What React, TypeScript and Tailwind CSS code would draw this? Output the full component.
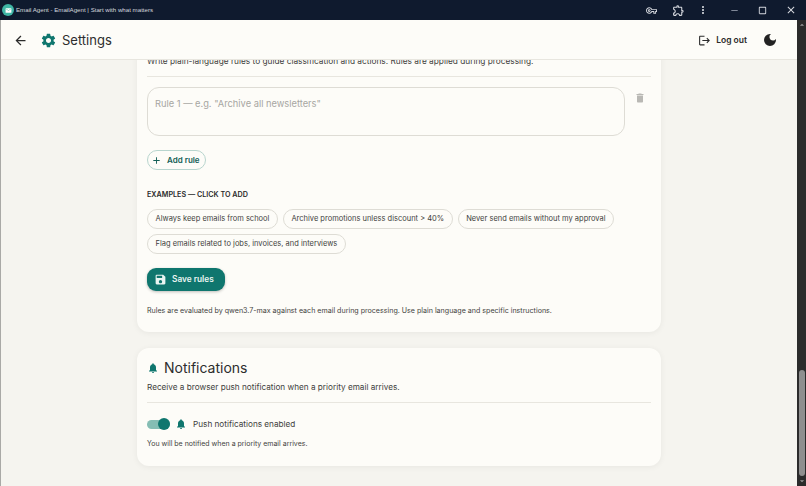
import React from "react";
import { MdArrowBack, MdSettings, MdLogout, MdDarkMode, MdAdd, MdSave, MdNotifications, MdOutlineExtension, MdMoreVert, MdOutlineVpnKey, MdDelete, MdClose, MdRemove, MdCropSquare, MdArrowDropUp, MdArrowDropDown, MdEmail } from "react-icons/md";

const examples = [
  "Always keep emails from school",
  "Archive promotions unless discount > 40%",
  "Never send emails without my approval",
  "Flag emails related to jobs, invoices, and interviews",
];

export default function App() {
  return (
    <div className="w-[806px] h-[486px] overflow-hidden flex flex-col bg-[#f5f4ef] font-['Inter',sans-serif] text-[#2b2b2b]">
      <div className="h-5 shrink-0 bg-[#0f1a2e] flex items-center pl-[2px] text-[#d5d8de]">
        <div className="w-3 h-3 rounded-full bg-[#3fb5a5] flex items-center justify-center">
          <MdEmail className="text-white" size={7} />
        </div>
        <span className="ml-[2px] text-[6.15px] whitespace-nowrap font-['Liberation_Sans',sans-serif]">Email Agent - EmailAgent | Start with what matters</span>
        <div className="ml-auto flex items-center">
          <MdOutlineVpnKey size={11} className="mr-[15px]" />
          <MdOutlineExtension size={13} className="mr-[12px]" />
          <MdMoreVert size={12} className="mr-[20px]" />
          <MdRemove size={11} className="mr-[17px] text-[#8b93a3]" />
          <MdCropSquare size={11} className="mr-[17px]" />
          <MdClose size={12} className="mr-[9px]" />
        </div>
      </div>
      <div className="flex-1 min-h-0 flex">
        <div className="flex-1 min-w-0 flex flex-col border-l border-[#a9a9a6]">
          <header className="h-10 shrink-0 bg-[#fdfcf8] border-b border-[#e8e6df] flex items-center pt-px pl-[12px] pr-[19px]">
            <MdArrowBack size={15} className="text-[#2b2b2b]" />
            <MdSettings size={17} className="ml-[12px] text-[#0f766e]" />
            <h1 className="ml-[5px] mt-[2px] text-[13px] font-normal text-[#2d2d2d]">Settings</h1>
            <MdLogout size={13} className="ml-auto text-[#2b2b2b]" />
            <span className="ml-[5px] text-[8.5px] font-semibold whitespace-nowrap">Log out</span>
            <MdDarkMode size={16} className="ml-[15px] text-[#222]" />
          </header>
          <main className="flex-1 min-h-0 overflow-hidden pl-[136px]">
            <section className="w-[524px] -mt-[8px] bg-[#fdfcf8] rounded-b-xl shadow-[0_1px_6px_rgba(0,0,0,0.06)] px-[10px] pb-[16px]">
              <p className="h-[25px] pt-[3px] leading-[12px] text-[8.3px] whitespace-nowrap text-[#3f3f3d] border-b border-[#e8e6df]">Write plain-language rules to guide classification and actions. Rules are applied during processing.</p>
              <div className="mt-[10px] flex items-start">
                <div className="w-[478px] h-[49px] rounded-xl border border-[#dedcd5] px-[7px] pt-[10px] text-[9.3px] leading-3 text-[#a7a6a2]">Rule 1 — e.g. "Archive all newsletters"</div>
                <MdDelete size={12} className="ml-[9px] mt-[5px] text-[#b9b8b4]" />
              </div>
              <button className="mt-[14px] h-[20px] w-[59px] rounded-full border border-[#b8d5ce] flex items-center pl-[3px] text-[8px] font-semibold whitespace-nowrap text-[#125e56]">
                <MdAdd size={11} />
                <span className="ml-[5px]">Add rule</span>
              </button>
              <h3 className="mt-[20px] text-[7.2px] leading-[10px] font-semibold text-[#2b2b2b]">EXAMPLES — CLICK TO ADD</h3>
              <div className="mt-[9px] flex flex-wrap gap-x-[5px] gap-y-[5px]">
                {examples.map((e) => (
                  <span key={e} className="h-[20px] rounded-full border border-[#dedcd5] px-[7.5px] flex items-center whitespace-nowrap text-[7.5px] text-[#3f3f3d]">{e}</span>
                ))}
              </div>
              <button className="mt-[14px] h-[23px] w-[78px] rounded-[9px] bg-[#0f766e] shadow-[0_1px_3px_rgba(0,0,0,0.25)] flex items-center pl-[7px] text-[8.3px] font-semibold whitespace-nowrap text-[#eaf5f2]">
                <MdSave size={13} />
                <span className="ml-[5px]">Save rules</span>
              </button>
              <p className="mt-[15px] text-[7.1px] leading-[10px] whitespace-nowrap text-[#3f3f3d]">Rules are evaluated by qwen3.7-max against each email during processing. Use plain language and specific instructions.</p>
            </section>
            <section className="mt-[16px] w-[524px] h-[118px] bg-[#fdfcf8] rounded-xl shadow-[0_1px_6px_rgba(0,0,0,0.06)] px-[10px] pt-[10px]">
              <div className="flex items-center">
                <MdNotifications size={12} className="text-[#0f766e]" />
                <h2 className="ml-[5px] text-[14px] leading-[20px] font-normal text-[#2d2d2d]">Notifications</h2>
              </div>
              <p className="mt-[3px] h-[21px] leading-[12px] text-[8.2px] whitespace-nowrap text-[#3f3f3d]">Receive a browser push notification when a priority email arrives.</p>
              <div className="border-t border-[#e8e6df]" />
              <div className="mt-[15px] flex items-center">
                <div className="relative w-[23px] h-[9px] rounded-full bg-[#85bdb4]">
                  <span className="absolute right-0 -top-[1.5px] w-3 h-3 rounded-full bg-[#0f766e]" />
                </div>
                <MdNotifications size={12} className="ml-[5px] text-[#0f766e]" />
                <span className="ml-[6px] text-[8.2px] whitespace-nowrap text-[#3f3f3d]">Push notifications enabled</span>
              </div>
              <p className="mt-[9px] text-[7px] leading-[10px] whitespace-nowrap text-[#3f3f3d]">You will be notified when a priority email arrives.</p>
            </section>
          </main>
        </div>
        <div className="w-[9px] shrink-0 bg-[#2b2b2b] flex flex-col items-center text-[#9a9a9a]">
          <MdArrowDropUp size={10} />
          <div className="mt-auto w-[6px] h-[106px] rounded-full bg-[#8f8f8f]" />
          <MdArrowDropDown size={10} />
        </div>
      </div>
    </div>
  );
}
